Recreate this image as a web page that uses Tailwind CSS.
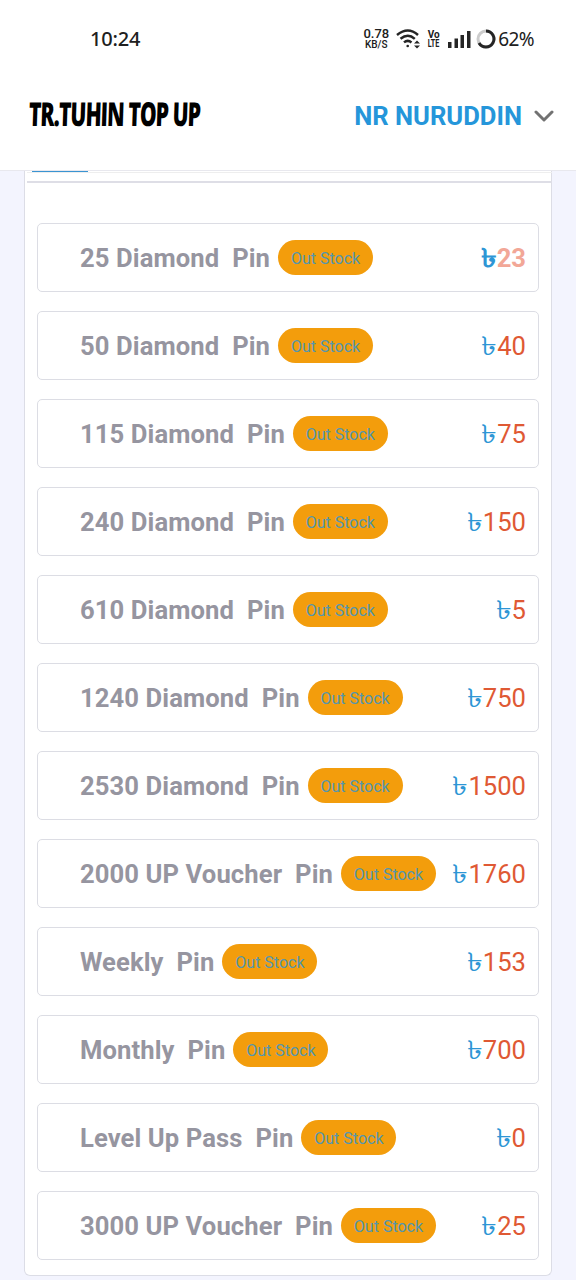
<!DOCTYPE html>
<html lang="en">
<head>
<meta charset="utf-8">
<title>TR.TUHIN TOP UP</title>
<script src="https://cdn.jsdelivr.net/npm/@tailwindcss/browser@4"></script>
</head>
<body class="w-[576px] h-[1280px] overflow-hidden bg-[#f3f4fe] font-[Roboto,sans-serif]">
<header class="h-[171px] bg-white border-b border-[#e8e8ee]">
  <div class="h-[78px] pl-[90px] pr-[42px] flex items-center justify-between text-[#202020]">
    <span class="text-[20px] font-medium font-['Noto_Sans',sans-serif] leading-none tracking-[-0.2px]">10:24</span>
    <div class="flex items-center">
      <div class="w-[26px] text-center font-medium mr-[7px] whitespace-nowrap"><div class="text-[13px] leading-[12px]">0.78</div><div class="text-[10px] leading-[12px] -mt-[1px]">KB/S</div></div>
      <svg class="mr-[6px]" width="25" height="20" viewBox="0 0 25 20" fill="none" stroke="#252525" stroke-width="2.5"><path d="M1 6Q12 -3 22 6M4.500 9.800Q12 3.600 18.800 9.800M8 13.400Q11.700 10.400 15.500 13.400"/><circle cx="11.700" cy="17" r="1.300" fill="#252525" stroke="none"/><path d="M18 14.500l3-3 3 3zM18 16.500l3 3 3-3z" fill="#252525" stroke="none"/></svg>
      <div class="w-[13px] text-center font-bold mr-[8px]"><div class="text-[10px] leading-[9px]">Vo</div><div class="text-[10px] leading-[9px] scale-x-[0.72] -mx-[3px]">LTE</div></div>
      <svg class="mr-[5px]" width="23" height="18" viewBox="0 0 23 18" fill="#252525"><path d="M0 12h3.500v6H0zM6.500 8.500H10V18H6.500zM12.500 5H16v13h-3.500zM19 1h3.500v17H19z"/></svg>
      <svg class="mr-[2px]" width="20" height="20" viewBox="0 0 20 20" fill="none" stroke-width="3"><circle cx="10" cy="10" r="8" stroke="#ccc"/><path d="M10 2A8 8 0 1 1 3 14" stroke="#252525"/></svg>
      <span class="text-[19px] font-['Noto_Sans',sans-serif] leading-none tracking-[-0.6px]">62%</span>
    </div>
  </div>
  <div class="h-[76px] pl-[29px] pr-[22px] flex items-center justify-between">
    <div class="w-[172px] -mt-[5px]"><span class="inline-block origin-left scale-x-[0.64] -skew-x-3 text-[33px] font-extrabold font-['Open_Sans',sans-serif] tracking-[-1.5px] text-black whitespace-nowrap">TR.TUHIN TOP UP</span></div>
    <div class="flex items-center gap-[12px] pt-px">
      <span class="text-[25.600px] font-bold text-[#2596da] whitespace-nowrap">NR NURUDDIN</span>
      <svg width="20" height="13" viewBox="0 0 20 13" fill="none" stroke="#727272" stroke-width="3" stroke-linecap="round" stroke-linejoin="round"><path d="M2 2l8 8 8-8"/></svg>
    </div>
  </div>
</header>
<main class="mx-[24px] h-[1105px] bg-white border border-t-0 border-[#dcdde6] rounded-b-[6px]">
  <div class="h-[12px] mx-[2px] -mr-px border-b-2 border-[#dedee6]"><div class="h-[2px] border-b border-[#eee]"><div class="ml-[5px] w-[56px] h-px bg-[#3a94d2]"></div></div></div>
  <div id="list" class="pt-[40px] px-[12px] flex flex-col gap-[19px]"></div>
</main>
<script>
const rows=[['25 Diamond','23'],['50 Diamond','40'],['115 Diamond','75'],['240 Diamond','150'],['610 Diamond','5'],['1240 Diamond','750'],['2530 Diamond','1500'],['2000 UP Voucher','1760'],['Weekly','153'],['Monthly','700'],['Level Up Pass','0'],['3000 UP Voucher','25']];
document.getElementById('list').innerHTML=rows.map(([n,p],i)=>`
<div class="h-[69px] border border-[#dcdde4] rounded-[5px] pl-[42px] pr-[12px] flex items-center">
 <span class="pt-[2px] text-[25.600px] font-bold tracking-[0.1px] text-[#9695a0] whitespace-pre">${n}  Pin</span>
 <span class="ml-[8px] w-[95px] h-[35px] shrink-0 rounded-full bg-[#f39d0c] text-[#5596ad] text-[16px] flex items-center justify-center pt-[2px]">Out Stock</span>
 <span class="ml-auto pt-[2px] text-[25.600px] whitespace-nowrap ${i?'text-[#df5934]':'font-bold text-[#f2a797]'}"><span class="inline-block origin-right scale-x-[1.22] text-[#2e96d5]">৳</span>${p}</span>
</div>`).join('');
</script>
</body>
</html>
